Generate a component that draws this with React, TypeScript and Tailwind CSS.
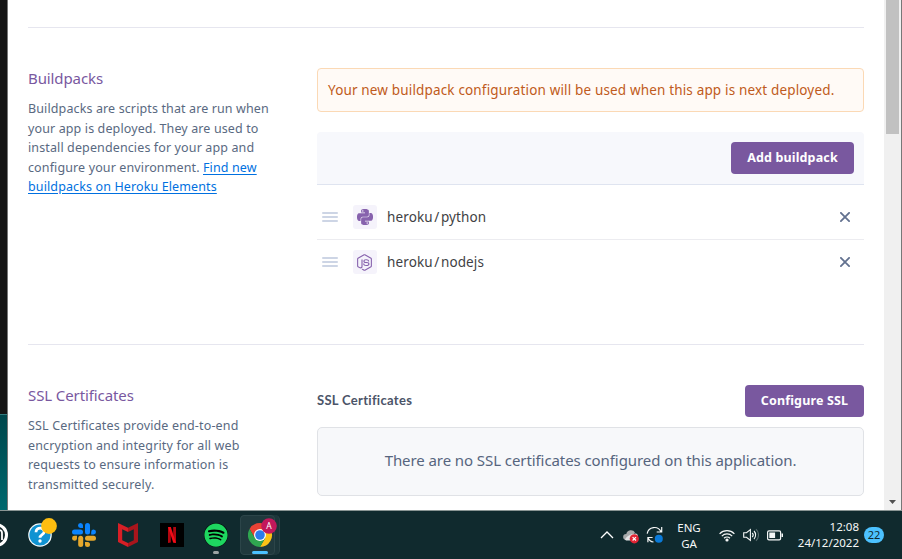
import React from "react";
import { FaNodeJs, FaSpotify } from "react-icons/fa";
import { SiPython } from "react-icons/si";

const HelpIcon = () => (
  <svg width="30" height="30" viewBox="0 0 30 30">
    <circle cx="12" cy="17" r="11.8" fill="#f4fafc" />
    <circle cx="12" cy="17" r="10.6" fill="#1093d2" />
    <path d="M8 14.2c0-5.4 8.4-5.2 8.2-.5-.1 3-4.2 2.8-4.2 6" fill="none" stroke="#fff" strokeWidth="2.8" />
    <circle cx="12" cy="23" r="1.7" fill="#fff" />
    <circle cx="21" cy="8" r="7.9" fill="#fdbd10" />
  </svg>
);

const SlackIcon = () => (
  <svg width="24" height="24" viewBox="0 0 24 24">
    <g fill="#0a84ff">
      <rect x="0" y="6.4" width="11" height="5" rx="2.5" />
      <path d="M11 5H8.6A2.5 2.5 0 1 1 11 2.5z" />
      <rect x="13" y="0" width="5" height="11.4" rx="2.5" />
      <path d="M19.2 11.4V8.9a2.4 2.4 0 1 1 2.4 2.5z" />
    </g>
    <g fill="#e5a82c">
      <path d="M5 12.8v2.4a2.5 2.5 0 1 1-2.5-2.4z" />
      <rect x="6.2" y="12.8" width="5" height="11.2" rx="2.5" />
      <rect x="13" y="12.8" width="11" height="5" rx="2.5" />
      <path d="M13 19h2.5A2.5 2.5 0 1 1 13 21.5z" />
    </g>
  </svg>
);

const McAfeeIcon = () => (
  <svg width="20" height="24" viewBox="0 0 20 24">
    <path d="M0 0l10 4.7V9L4.2 6.2v11L10 20v4L0 19z" fill="#d71f26" />
    <path d="M20 0L10 4.7V9l5.8-2.8v11L10 20v4l10-5z" fill="#a9151c" />
  </svg>
);

const NetflixIcon = () => (
  <svg width="24" height="24" viewBox="0 0 24 24">
    <path d="M0 0h24v24H0z" fill="#000" />
    <path d="M8 4h2.8v15.6L8 20zM13.2 4H16v16l-2.8-.4z" fill="#b1060f" />
    <path d="M8 4h2.8L16 20l-2.8-.4z" fill="#f10c17" />
  </svg>
);

const ChromeIcon = () => (
  <svg width="30" height="30" viewBox="0 0 30 30">
    <path d="M12 12h10.4A12 12 0 0 1 12 30l5.2-9z" fill="#fbc116" />
    <path d="M1.6 12A12 12 0 0 1 22.4 12H12l-5.2 9z" fill="#e94235" />
    <path d="M1.6 12A12 12 0 0 0 12 30l5.2-9H6.8z" fill="#2fa650" />
    <circle cx="12" cy="18" r="6" fill="#fff" />
    <circle cx="12" cy="18" r="4.8" fill="#2b7cec" />
    <circle cx="21" cy="9" r="7.8" fill="#c2185b" />
    <text x="21" y="12" textAnchor="middle" fontSize="8.5" fontFamily="Noto Sans" fill="#fff">A</text>
  </svg>
);

const Cloud = () => (
  <svg width="16" height="15" viewBox="0 0 16 15">
    <path d="M3 11a3 3 0 0 1 .3-6A4.7 4.7 0 0 1 12 3.6L5 11z" fill="#a8aaab" />
    <path d="M2 10.5c2-4 6-5.5 11-6a3 3 0 0 1 1 5L8 11.5H3z" fill="#e2e3e4" />
    <circle cx="11.3" cy="9.8" r="4.6" fill="#e02434" />
    <path d="M9.6 8.1l3.4 3.4m0-3.4l-3.4 3.4" stroke="#fff" strokeWidth="1.2" />
  </svg>
);

const Sync = () => (
  <svg width="18" height="18" viewBox="0 0 18 18" fill="none" stroke="#f5f7f7" strokeWidth="1.2">
    <path d="M1.2 7.6A7.3 7.3 0 0 1 15 5.7M15.7 1v5h-5" />
    <path d="M7.5 16A7 7 0 0 1 2 11.7M1.9 16.2v-4.7h4.7" />
    <circle cx="12.8" cy="12.8" r="4" fill="#0a7ad8" stroke="none" />
  </svg>
);

const Wifi = () => (
  <svg width="16" height="13" viewBox="0 0 16 13" fill="none" stroke="#f5f7f7" strokeWidth="1.2">
    <path d="M.6 4.8a10.4 10.4 0 0 1 14.8 0M2.8 7.1a7.3 7.3 0 0 1 10.4 0M5 9.3a4.3 4.3 0 0 1 6 0" />
    <circle cx="8" cy="11" r="1.6" fill="#f5f7f7" stroke="none" />
  </svg>
);

const Volume = () => (
  <svg width="16" height="14" viewBox="0 0 16 14" fill="none" stroke="#f5f7f7" strokeWidth="1.1">
    <path d="M.7 4.8h2.8L7.4 1.6v10.8L3.5 9.2H.7z" />
    <path d="M9.2 4.8a3.2 3.2 0 0 1 0 4.4M11 3a5.8 5.8 0 0 1 0 8" />
    <path d="M13 1.2a8 8 0 0 1 0 11.6" opacity=".3" />
  </svg>
);

const Battery = () => (
  <svg width="17" height="11" viewBox="0 0 17 11">
    <rect x=".6" y=".8" width="13" height="9" rx="1.4" fill="none" stroke="#f5f7f7" strokeWidth="1.2" />
    <path d="M2.3 2.5h5.8v5.6H2.3zM14.5 3.5H16v3.6h-1.5z" fill="#f5f7f7" />
  </svg>
);

const Grip = () => (
  <div className="flex w-4 flex-col gap-[2px]">
    <div className="h-[2px] rounded-full bg-[#cdd5e5]" />
    <div className="h-[2px] rounded-full bg-[#cdd5e5]" />
    <div className="h-[2px] rounded-full bg-[#cdd5e5]" />
  </div>
);

const Row = ({ pack, children }: { pack: string; children: React.ReactNode }) => (
  <div className="flex h-11 items-center pl-[5px] pr-[14px]">
    <Grip />
    <div className="ml-[15px] flex size-6 items-center justify-center rounded-[3px] bg-[#f5f3fb] pr-px text-[#8762ad]">{children}</div>
    <span className="ml-[10px] text-[13.5px] tracking-[0.13px] text-[#3f3f44]">heroku<span className="mx-[1.5px]">/</span>{pack}</span>
    <svg className="ml-auto" width="10" height="10" viewBox="0 0 10 10">
      <path d="M.3.3l9.4 9.4m0-9.4L.3 9.7" stroke="#62718f" strokeWidth="1.8" />
    </svg>
  </div>
);

const Page = () => (
  <div className="h-[510px] w-[876px] overflow-hidden bg-white pl-5 pr-5 font-['Noto_Sans',sans-serif]">
    <div className="h-[28px] border-b border-[#e6e6ef]" />
    <section className="flex h-[317px] border-b border-[#e6e6ef] pt-10">
      <div className="w-[289px] shrink-0">
        <h2 className="text-[15px] leading-5 tracking-[-0.1px] text-[#79589f]">Buildpacks</h2>
        <p className="mt-[11px] text-[12.5px] leading-[19.5px] tracking-[0.12px] whitespace-nowrap text-[#596981]">
          Buildpacks are scripts that are run when<br />
          your app is deployed. They are used to<br />
          install dependencies for your app and<br />
          configure your environment. <a className="text-[#0070e0] underline underline-offset-2">Find new<br />
          buildpacks on Heroku Elements</a>
        </p>
      </div>
      <div className="w-[547px]">
        <div className="flex h-11 items-center rounded-[4px] border border-[#fbd9b5] bg-[#fffaf6] pl-[10px] text-[13.5px] tracking-[0.16px] whitespace-nowrap text-[#bf5a20]">
          Your new buildpack configuration will be used when this app is next deployed.
        </div>
        <div className="mt-5 flex h-[53px] items-center justify-end rounded-t-[4px] border-b border-[#dfe4f0] bg-[#f7f8fc] pr-[10px]">
          <button className="h-8 w-[123px] rounded-[4px] bg-[#79589f] text-[12.5px] font-bold tracking-[0.15px] text-white">Add buildpack</button>
        </div>
        <div className="mt-[10px] border-b border-[#ececf0]">
          <Row pack="python"><SiPython size={16} /></Row>
        </div>
        <Row pack="nodejs"><FaNodeJs size={17} /></Row>
      </div>
    </section>
    <section className="flex pt-10">
      <div className="w-[289px] shrink-0">
        <h2 className="text-[15px] leading-5 tracking-[-0.1px] text-[#79589f]">SSL Certificates</h2>
        <p className="mt-[11px] text-[12.5px] leading-[19.5px] tracking-[0.15px] whitespace-nowrap text-[#596981]">
          SSL Certificates provide end-to-end<br />
          encryption and integrity for all web<br />
          requests to ensure information is<br />
          transmitted securely.
        </p>
      </div>
      <div className="w-[547px]">
        <div className="flex h-8 items-center justify-between">
          <h3 className="font-['Lato',sans-serif] text-[13px] font-bold tracking-[0.3px] text-[#4b5468]">SSL Certificates</h3>
          <button className="h-8 w-[119px] rounded-[4px] bg-[#79589f] text-[12.5px] font-bold tracking-[0.15px] text-white">Configure SSL</button>
        </div>
        <div className="mt-[10px] flex h-[69px] items-center justify-center rounded-[5px] border border-[#e0e2e6] bg-[#f7f8fa] text-[15px] pb-[2px] tracking-[-0.08px] whitespace-nowrap text-[#56657e]">
          There are no SSL certificates configured on this application.
        </div>
      </div>
    </section>
  </div>
);

const Taskbar = () => (
  <div className="flex h-[49px] w-[902px] items-center overflow-hidden border-t border-[#8a9594] bg-[#102a2e] font-['Noto_Sans',sans-serif] text-[#f5f7f7]">
    <svg className="shrink-0" width="8" height="24" viewBox="0 0 8 24">
      <circle cx="-4" cy="12" r="10.5" fill="#17282b" stroke="#fff" strokeWidth="3" />
      <path d="M-4 7h3q3 0 3 3v7" fill="none" stroke="#fff" strokeWidth="1.8" />
    </svg>
    <div className="ml-5 -mt-[5px]"><HelpIcon /></div>
    <div className="ml-[14px]"><SlackIcon /></div>
    <div className="ml-[22px]"><McAfeeIcon /></div>
    <div className="ml-[22px]"><NetflixIcon /></div>
    <div className="ml-5 flex flex-col items-center pt-[6px]">
      <div className="rounded-full bg-black"><FaSpotify size={24} color="#1ed760" /></div>
      <div className="mt-[4px] h-[3px] w-[6px] rounded-full bg-[#9ba4a4]" />
    </div>
    <div className="ml-[12px] flex h-10 w-10 shrink-0 rounded-[5px] border-r border-[#294246] bg-[#1c363a]">
      <div className="flex w-[35px] flex-col items-center rounded-[4px] border border-[#2c4549] bg-[#20393d]">
        <div className="ml-[10px] mt-[1px]"><ChromeIcon /></div>
        <div className="ml-[5px] mt-[4px] h-[3px] w-4 shrink-0 rounded-full bg-[#4cc2ff]" />
      </div>
    </div>
    <svg className="ml-[320px] shrink-0" width="14" height="8" viewBox="0 0 14 8"><path d="M1 7l6-6 6 6" fill="none" stroke="#fff" strokeWidth="1.3" /></svg>
    <div className="ml-[9px] mt-[2px]"><Cloud /></div>
    <div className="ml-[7px]"><Sync /></div>
    <div className="ml-[7px] w-[36px] text-center text-[11.5px] leading-4 pt-px">ENG<br />GA</div>
    <div className="ml-[12px]"><Wifi /></div>
    <div className="ml-2"><Volume /></div>
    <div className="ml-2"><Battery /></div>
    <div className="ml-auto text-right text-[11.5px] leading-4">12:08<br />24/12/2022</div>
    <div className="ml-[5px] mr-[18px] flex h-4 w-5 items-center justify-center rounded-full bg-[#4cc2ff] text-[11px] text-[#102a2e]">22</div>
  </div>
);

export default function App() {
  return (
    <div className="h-[559px] w-[902px] overflow-hidden bg-white">
      <div className="flex h-[510px]">
        <div className="flex w-[8px] flex-col border-r border-[#777]">
          <div className="h-[414px] bg-[#151515]" />
          <div className="flex-1 border-t border-[#337b7e] bg-linear-to-b from-[#00474c] to-[#00686e]" />
        </div>
        <Page />
        <div className="flex w-[17px] flex-col items-center bg-[#f0f0f0]">
          <div className="h-[134px] w-[13px] bg-[#c1c1c1]" />
          <svg className="mb-[6px] mt-auto" width="7" height="4" viewBox="0 0 7 4"><path d="M0 0h7L3.5 4z" fill="#505050" /></svg>
        </div>
        <div className="w-px bg-[#777]" />
      </div>
      <Taskbar />
    </div>
  );
}
